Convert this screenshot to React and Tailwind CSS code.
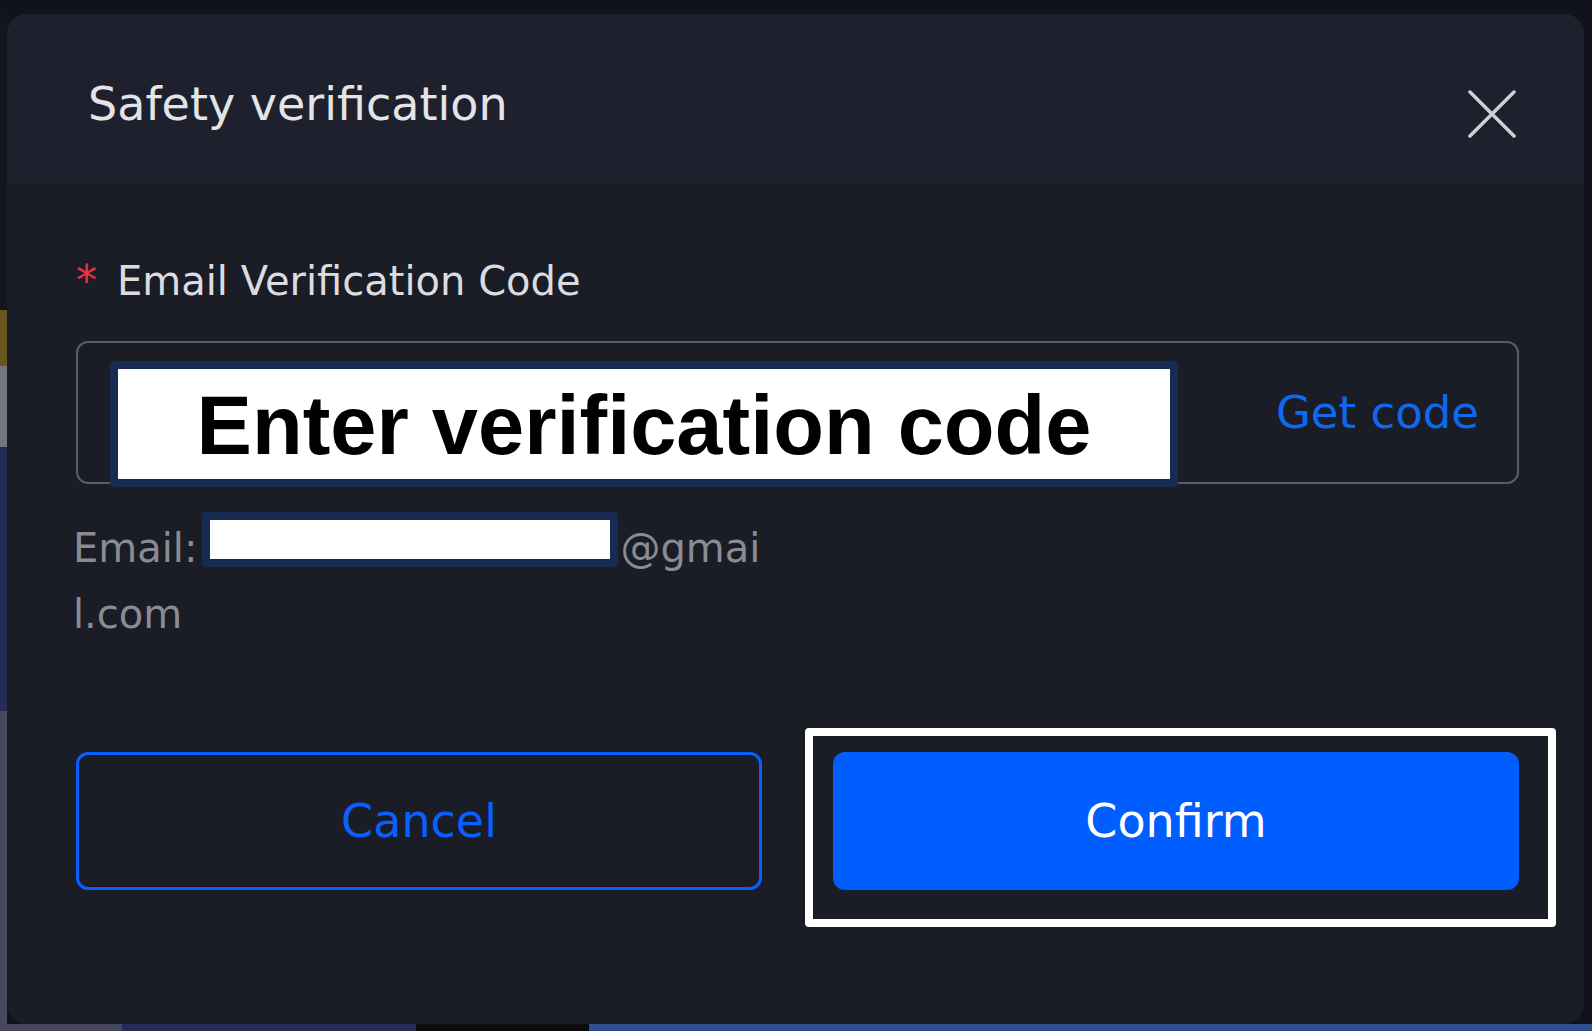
import React from "react";

// background strip colours of the app behind the dialog
const leftStrip = [
  { h: 296, c: "bg-[#14151d]" },
  { h: 56, c: "bg-[#6a5420]" },
  { h: 81, c: "bg-[#74757e]" },
  { h: 264, c: "bg-[#242b56]" },
  { h: 313, c: "bg-[#474760]" },
];

function CloseIcon() {
  return (
    <svg width="48" height="48" viewBox="0 0 48 48" className="mt-[76px]">
      <path
        d="M2 2 L46 46 M46 2 L2 46"
        stroke="#cfd0d4"
        strokeWidth="3.5"
        strokeLinecap="round"
      />
    </svg>
  );
}

export default function App() {
  return (
    <div className="w-[1592px] h-[1031px] bg-[#11131a] flex flex-col overflow-hidden font-['DejaVu_Sans',Verdana,sans-serif]">

      {/* top strip */}
      <div className="h-[14px] shrink-0" />

      <div className="flex flex-1">

        {/* left strip */}
        <div className="w-[7px] flex flex-col">
          {leftStrip.map((s, i) => (
            <div key={i} className={s.c} style={{ height: s.h }} />
          ))}
        </div>

        {/* =====================================
            MODAL
        ===================================== */}
        <div className="w-[1577px] h-[1010px] rounded-[20px] overflow-hidden bg-[#1a1c26] flex flex-col">

          {/* HEADER */}
          <div className="h-[170px] shrink-0 bg-[#1e212d] flex justify-between pl-[81px] pr-[68px]">
            <h1 className="pt-[67px] text-[46px] leading-none text-[#e4e4e7] font-normal">
              Safety verification
            </h1>
            <CloseIcon />
          </div>

          {/* BODY */}
          <div className="pl-[69px] pr-[65px] pt-[76px]">

            {/* LABEL */}
            <div className="flex items-baseline leading-none">
              <span className="text-[42px] text-[#e8334d] mr-[20px]">*</span>
              <span className="text-[40px] text-[#dcdce0]">
                Email Verification Code
              </span>
            </div>

            {/* INPUT */}
            <div className="relative mt-[39px] h-[143px] border-2 border-[#5a5c66] rounded-[12px] flex items-center justify-end pr-[38px]">
              <span className="text-[45px] text-[#1068f0] leading-none">
                Get code
              </span>

              <div className="absolute left-[32px] top-[18px] w-[1068px] h-[126px] rounded-[4px] bg-[#172a52] p-[8px]">
                <div className="w-full h-full bg-white flex items-center justify-center pt-[2px]">
                  <span className="font-['Liberation_Sans',Arial,sans-serif] font-bold text-[83px] leading-none text-black">
                    Enter verification code
                  </span>
                </div>
              </div>
            </div>

            {/* EMAIL */}
            <p className="mt-[31px] text-[40px] leading-[66px] text-[#8a8b93] -ml-[3px]">
              Email:
              <span className="inline-block align-[-5px] -mt-[3px] ml-[5px] mr-[2px] w-[416px] h-[55px] rounded-[4px] bg-[#172a52] p-[8px]">
                <span className="block w-full h-full bg-white" />
              </span>
              @gmai
              <br />
              l.com
            </p>

            {/* ACTIONS */}
            <div className="mt-[105px] flex gap-[71px]">
              <button className="w-[686px] h-[138px] border-[3px] border-[#0a5fff] rounded-[12px] text-[46px] text-[#0a5fff]">
                Cancel
              </button>

              <div className="relative">
                <button className="w-[686px] h-[138px] bg-[#005eff] rounded-[12px] text-[46px] text-white">
                  Confirm
                </button>
                <div className="absolute -left-[28px] -top-[24px] -right-[37px] -bottom-[37px] border-[8px] border-white rounded-[4px] pointer-events-none" />
              </div>
            </div>
          </div>
        </div>

        {/* right strip */}
        <div className="flex-1" />
      </div>

      {/* bottom strip */}
      <div className="h-[7px] shrink-0 flex">
        <div className="w-[122px] bg-[#474760]" />
        <div className="w-[294px] bg-[#242b56]" />
        <div className="w-[173px] bg-[#0b0b10]" />
        <div className="flex-1 bg-[#2f4f8e]" />
      </div>
    </div>
  );
}
